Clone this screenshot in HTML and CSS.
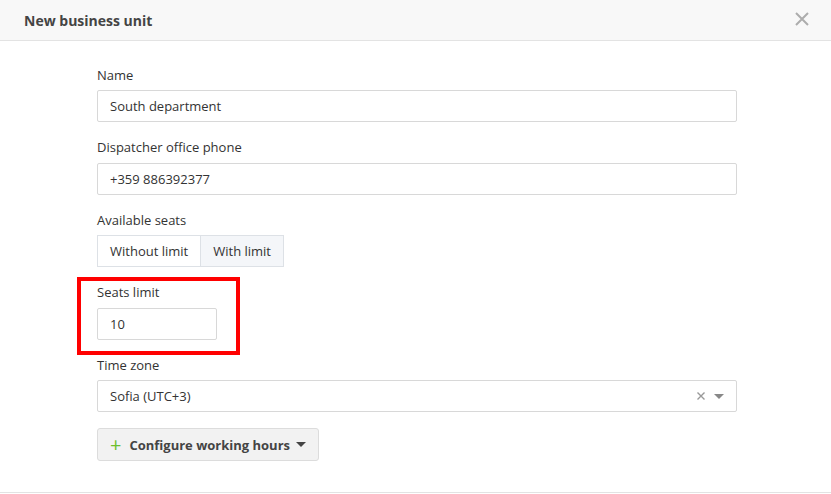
FILE: index.html
```html
<!DOCTYPE html>
<html lang="en">

<head>
    <meta charset="UTF-8">
    <meta name="viewport" content="width=device-width, initial-scale=1.0">
    <title>New business unit</title>
    <link rel="stylesheet" href="styles.css">
</head>

<body>
    <div class="modal">
        <div class="modal-header">
            <span class="modal-title">New business unit</span>
            <svg class="modal-close" width="14" height="14" viewBox="0 0 14 14">
                <path d="M1 1L13 13M13 1L1 13" stroke="#adadad" stroke-width="2" fill="none" />
            </svg>
        </div>

        <div class="modal-body">
            <div class="field">
                <label>Name</label>
                <div class="input">South department</div>
            </div>

            <div class="field">
                <label>Dispatcher office phone</label>
                <div class="input">+359 886392377</div>
            </div>

            <div class="field">
                <label>Available seats</label>
                <div class="btn-group">
                    <div class="btn-toggle">Without limit</div>
                    <div class="btn-toggle active">With limit</div>
                </div>
            </div>

            <div class="field highlighted">
                <label>Seats limit</label>
                <div class="input input-small">10</div>
            </div>

            <div class="field">
                <label>Time zone</label>
                <div class="input select">
                    <span>Sofia (UTC+3)</span>
                    <span class="select-icons">
                        <svg width="8" height="8" viewBox="0 0 8 8">
                            <path d="M0.5 0.5L7.5 7.5M7.5 0.5L0.5 7.5" stroke="#999" stroke-width="1.4" fill="none" />
                        </svg>
                        <span class="select-caret"></span>
                    </span>
                </div>
            </div>

            <div class="btn-configure">
                <span class="plus">+</span>
                Configure working hours
                <span class="caret"></span>
            </div>
        </div>
    </div>
</body>

</html>
```

FILE: styles.css
```css
body {
    margin: 0;
    font-family: "Open Sans", Arial, sans-serif;
    font-size: 13px;
    color: #333;
    background: #fff;
}

.modal {
    width: 831px;
    border-bottom: 1px solid #e3e3e3;
}

.modal-header {
    display: flex;
    justify-content: space-between;
    align-items: center;
    height: 40px;
    padding: 0 22px 0 24px;
    background: #f8f8f8;
    border-bottom: 1px solid #e3e3e3;
}

.modal-title {
    font-size: 14px;
    font-weight: 700;
    color: #444;
}

.modal-close {
    display: block;
    margin-top: -2px;
}

.modal-body {
    padding: 24.5px 94px 31px 97px;
}

.field {
    margin-bottom: 16px;
}

.field label {
    display: block;
    line-height: 18px;
    margin-bottom: 6.5px;
}

.input {
    box-sizing: border-box;
    height: 32px;
    line-height: 30px;
    padding: 0 12px;
    border: 1px solid #d8d8d8;
    border-radius: 2px;
    background: #fff;
}

.input-small {
    width: 120px;
}

.highlighted {
    position: relative;
}

.highlighted::after {
    content: "";
    position: absolute;
    left: -20px;
    top: -6px;
    width: 163px;
    height: 78px;
    box-sizing: border-box;
    border: 4px solid #f00;
}

.select {
    display: flex;
    justify-content: space-between;
    align-items: center;
}

.select-icons {
    display: flex;
    align-items: center;
    gap: 9px;
}

.select-caret,
.caret {
    width: 0;
    height: 0;
    border-left: 5px solid transparent;
    border-right: 5px solid transparent;
    border-top: 5px solid #888;
}

.btn-group {
    display: flex;
}

.btn-toggle {
    box-sizing: border-box;
    height: 32px;
    line-height: 30px;
    padding: 0 12px;
    border: 1px solid #dde1e6;
}

.btn-toggle + .btn-toggle {
    border-left: none;
}

.btn-toggle.active {
    background: #f4f6f9;
}

.btn-configure {
    display: inline-flex;
    align-items: center;
    box-sizing: border-box;
    height: 33px;
    padding: 0 12px 0 12px;
    background: #f2f2f2;
    border: 1px solid #dcdcdc;
    border-radius: 3px;
    font-weight: 700;
    color: #444;
}

.btn-configure .plus {
    color: #6cbf2e;
    font-size: 20px;
    font-weight: 400;
    margin-right: 8px;
    line-height: 1;
}

.btn-configure .caret {
    margin-left: 6px;
    border-top-color: #444;
}
```
